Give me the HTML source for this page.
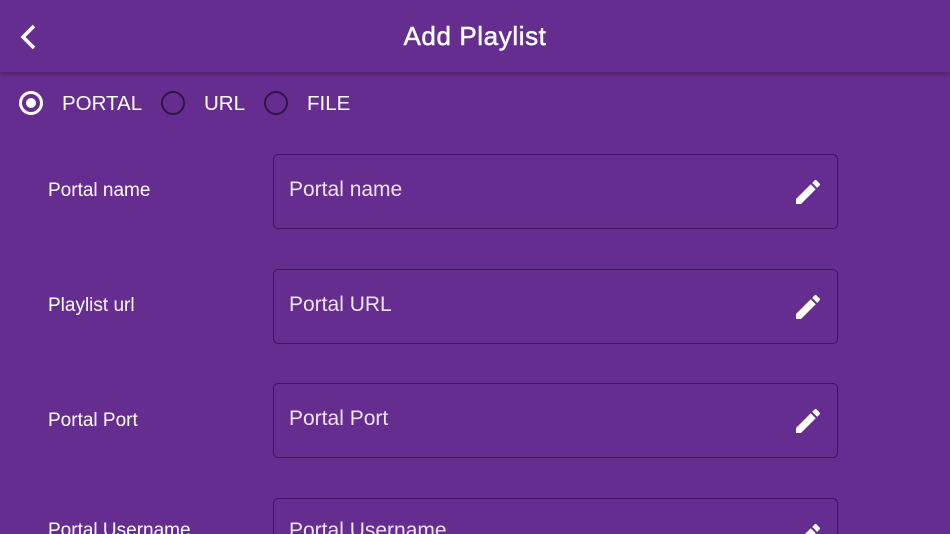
<!DOCTYPE html>
<html style="width:950px;height:534px;overflow:hidden"><head><meta charset="utf-8"><style>
body{margin:0;width:950px;height:534px;overflow:hidden;background:#662d91;font-family:"Liberation Sans",sans-serif;color:#fff;position:relative}
.bar{position:absolute;left:0;top:0;width:950px;height:72px;background:#662d91;box-shadow:0 2px 5px rgba(0,0,0,.3);z-index:2}
.title{position:absolute;top:21px;width:950px;text-align:center;font-size:26px;letter-spacing:0.6px;-webkit-text-stroke:0.5px #fff}
.lbl{position:absolute;left:48px;font-size:19px}
.box{position:absolute;left:273px;width:563px;height:73px;border:1.5px solid #3a1756;border-radius:5px}
.box span{position:absolute;left:15px;top:23px;font-size:21px;color:#ece4f2}
.box svg{position:absolute;left:518px;top:21px}
.r{position:absolute;top:91px;width:24px;height:24px;border-radius:50%;box-sizing:border-box}
.rt{position:absolute;top:92px;font-size:20.5px}
</style></head><body>
<div class="bar"><svg style="position:absolute;left:18px;top:23px" width="22" height="28" viewBox="0 0 22 28"><path d="M16 3 L5 14 L16 25" stroke="#fff" stroke-width="3.5" fill="none"/></svg><div class="title">Add Playlist</div></div>
<div class="r" style="left:19px;border:3px solid #fff"><div style="position:absolute;left:4px;top:4px;width:10px;height:10px;border-radius:50%;background:#fff"></div></div>
<div class="rt" style="left:62px">PORTAL</div>
<div class="r" style="left:161px;border:2.5px solid #2f1445"></div>
<div class="rt" style="left:204px">URL</div>
<div class="r" style="left:264px;border:2.5px solid #2f1445"></div>
<div class="rt" style="left:307px">FILE</div>

<div class="lbl" style="top:180px">Portal name</div>
<div class="box" style="top:154px"><span>Portal name</span><svg width="32" height="32" viewBox="0 0 24 24"><path fill="#fff" d="M3 17.25V21h3.750L17.81 9.94l-3.75-3.75L3 17.25zM20.71 7.04a1 1 0 0 0 0-1.41l-2.34-2.34a1 1 0 0 0-1.41 0l-1.83 1.83 3.75 3.75 1.83-1.83z"/></svg></div>
<div class="lbl" style="top:295px">Playlist url</div>
<div class="box" style="top:269px"><span>Portal URL</span><svg width="32" height="32" viewBox="0 0 24 24"><path fill="#fff" d="M3 17.25V21h3.75L17.81 9.94l-3.75-3.75L3 17.25zM20.71 7.04a1 1 0 0 0 0-1.41l-2.34-2.34a1 1 0 0 0-1.41 0l-1.83 1.83 3.75 3.75 1.83-1.83z"/></svg></div>
<div class="lbl" style="top:410px">Portal Port</div>
<div class="box" style="top:383px"><span>Portal Port</span><svg width="32" height="32" viewBox="0 0 24 24"><path fill="#fff" d="M3 17.25V21h3.75L17.81 9.94l-3.75-3.75L3 17.25zM20.71 7.04a1 1 0 0 0 0-1.41l-2.34-2.34a1 1 0 0 0-1.41 0l-1.83 1.83 3.75 3.75 1.83-1.83z"/></svg></div>
<div class="lbl" style="top:520px">Portal Username</div>
<div class="box" style="top:498px"><span style="top:20px">Portal Username</span><svg width="32" height="32" viewBox="0 0 24 24"><path fill="#fff" d="M3 17.25V21h3.75L17.81 9.94l-3.75-3.75L3 17.25zM20.71 7.04a1 1 0 0 0 0-1.41l-2.34-2.34a1 1 0 0 0-1.41 0l-1.83 1.83 3.75 3.75 1.83-1.83z"/></svg></div>
</body></html>
